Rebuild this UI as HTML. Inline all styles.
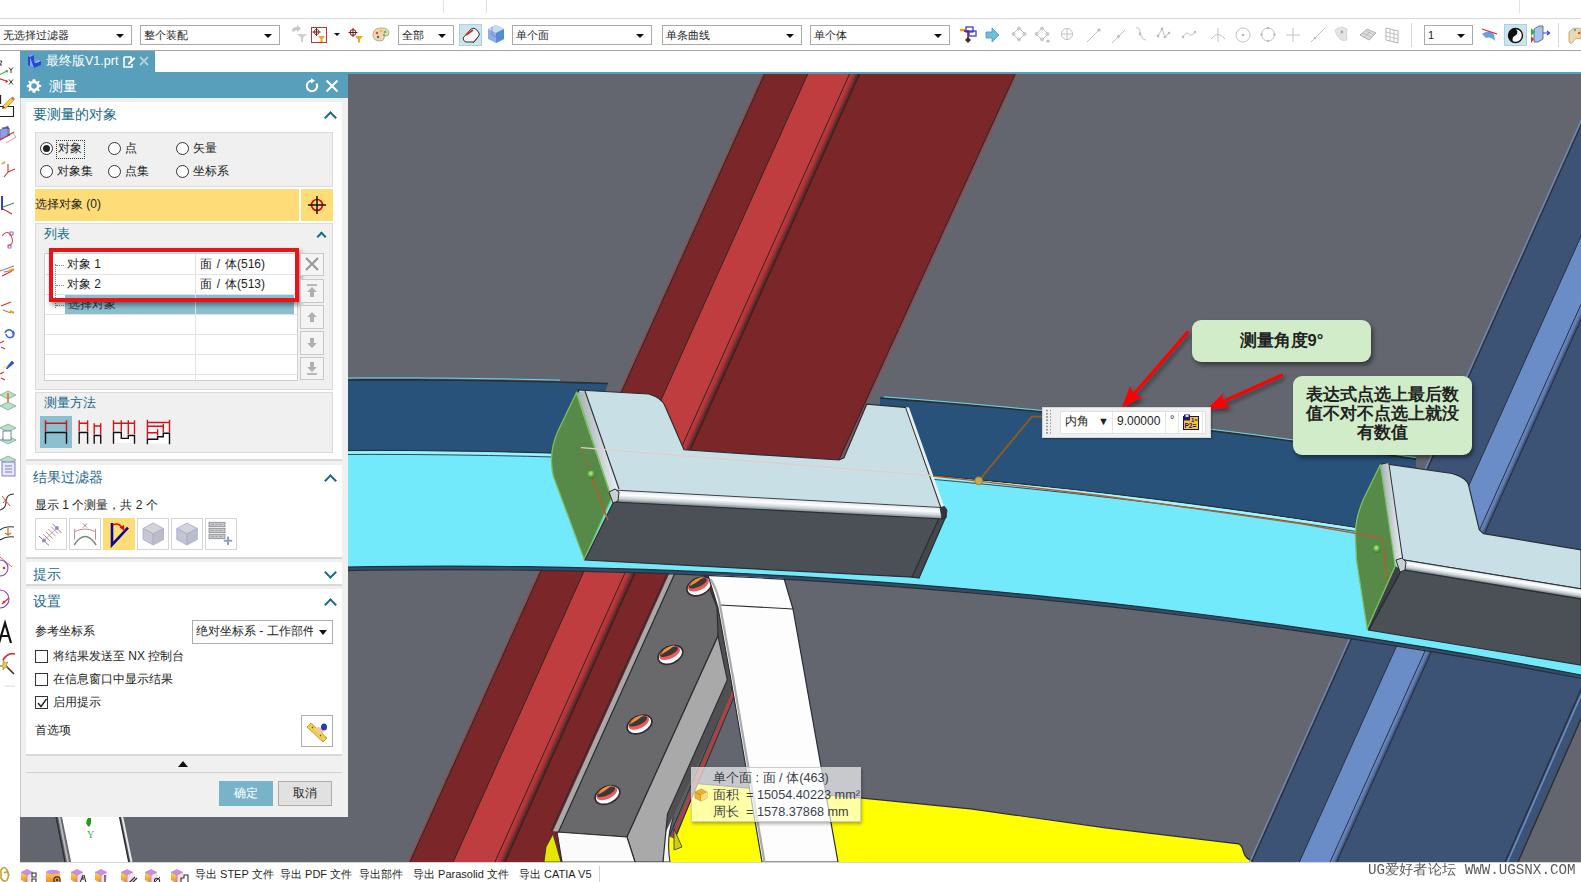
<!DOCTYPE html>
<html><head><meta charset="utf-8">
<style>
*{box-sizing:border-box;margin:0;padding:0}
html,body{width:1581px;height:882px;overflow:hidden;background:#fff}
body{position:relative;font-family:"Liberation Sans",sans-serif;font-size:12px;color:#1e1e1e}
.a{position:absolute}
.combo{position:absolute;height:20px;top:25px;border:1px solid #a9a9a9;background:#fff;font-size:11px;line-height:18px;padding-left:3px;white-space:nowrap;overflow:hidden}
.combo .dd{position:absolute;right:7px;top:8px;width:0;height:0;border-left:4px solid transparent;border-right:4px solid transparent;border-top:4px solid #111}
.sec{position:absolute;left:26px;width:316px;background:#fff}
.sh{position:absolute;left:7px;font-size:13.5px;color:#19698a}
.chev{position:absolute;width:9px;height:9px;border-left:2px solid #19698a;border-top:2px solid #19698a;transform:rotate(45deg)}
.chevd{position:absolute;width:9px;height:9px;border-right:2px solid #19698a;border-bottom:2px solid #19698a;transform:rotate(45deg)}
.grp{position:absolute;background:#f0f0f0;border:1px solid #dadada}
.radio{position:absolute;width:13px;height:13px;border:1px solid #333;border-radius:50%;background:#fff}
.cb{position:absolute;width:13px;height:13px;border:1px solid #333;background:#fff}
.btn{position:absolute;border:1px solid #c8c8c8;background:#f4f4f4}
.lrow{position:absolute;left:0;width:252px;height:20px;border-bottom:1px solid #e6e6e6}
</style></head><body>

<!-- top white bar -->
<div class="a" style="left:0;top:18px;width:1581px;height:1px;background:#d7d7d7"></div>
<div class="a" style="left:443px;top:0;width:1px;height:13px;background:#e2e2e2"></div>
<div class="a" style="left:486px;top:0;width:1px;height:13px;background:#e2e2e2"></div>
<div class="a" style="left:1519px;top:0;width:1px;height:13px;background:#e2e2e2"></div>
<!-- toolbar bottom line -->
<div class="a" style="left:0;top:50px;width:1581px;height:1px;background:#a0a6ab"></div>

<div class="combo" style="left:0;width:132px;border-left:none">无选择过滤器<i class="dd"></i></div>
<div class="combo" style="left:140px;width:140px">整个装配<i class="dd"></i></div>
<div class="combo" style="left:398px;width:56px">全部<i class="dd"></i></div>
<div class="combo" style="left:512px;width:140px">单个面<i class="dd"></i></div>
<div class="combo" style="left:662px;width:140px">单条曲线<i class="dd"></i></div>
<div class="combo" style="left:810px;width:140px">单个体<i class="dd"></i></div>
<div class="combo" style="left:1424px;width:49px">1<i class="dd"></i></div>

<!-- TOOLBAR_ICONS -->
<div class="a" style="left:459px;top:24px;width:23px;height:22px;background:#cde4ec;border:1px solid #a9d1de"></div>
<div class="a" style="left:1504px;top:24px;width:23px;height:22px;background:#cde4ec;border:1px solid #a9d1de"></div>
<div class="a" style="left:1411px;top:23px;width:1px;height:24px;background:#d8d8d8"></div>
<div class="a" style="left:1558px;top:23px;width:1px;height:24px;background:#d8d8d8"></div>
<svg class="a" style="left:0;top:18px" width="1581" height="32" viewBox="0 18 1581 32">
<!-- undo filter -->
<path d="M292,31 q0,-4 5,-4 v-2 l4,3.5 l-4,3.5 v-2 q-3,0 -3,2 z" fill="#c8c8c8"/><path d="M297,34 h10 l-4,4 v4 h-2 v-4 z" fill="#d0d0d0"/>
<!-- red box -->
<rect x="311.5" y="27.5" width="15" height="15" fill="none" stroke="#d03030" stroke-width="1"/>
<circle cx="316.5" cy="32" r="2.6" fill="none" stroke="#d02020" stroke-width="1"/><path d="M316.5,28 v8 M312.5,32 h8" stroke="#222" stroke-width="0.9"/>
<path d="M318,36 h7 l-2.5,3 v3 h-2 v-3 z" fill="#e8a820"/>
<path d="M334,33 h6 l-3,3 z" fill="#111"/>
<circle cx="353" cy="32.5" r="2.8" fill="none" stroke="#d02020" stroke-width="1.1"/><path d="M353,28 v9 M348.5,32.5 h9" stroke="#222" stroke-width="0.9"/>
<path d="M355,36 h8 l-3,3.5 v3 h-2 v-3 z" fill="#e8a820"/>
<!-- palette -->
<path d="M373,35 q0,-7 8,-7 q8,0 8,5 q0,3 -3,3 q-2,0 -2,2 q0,3 -4,3 q-7,0 -7,-6 z" fill="#ecd9b0" stroke="#b89a68" stroke-width="0.8"/>
<circle cx="377" cy="33" r="1.3" fill="#e44"/><circle cx="381" cy="31" r="1.3" fill="#fb0"/><circle cx="385" cy="32" r="1.3" fill="#4c4"/><circle cx="384" cy="35" r="1.1" fill="#48f"/><circle cx="378" cy="37" r="1.2" fill="#36c"/>
<!-- eraser in highlighted btn -->
<path d="M463,38 l8,-9 q3,-2 6,1 l2,3 q1,2 -1,4 l-4,5 h-8 q-3,-1 -3,-4 z" fill="#f8f8f8" stroke="#333" stroke-width="1"/><path d="M466,35 l7,-5" stroke="#e02020" stroke-width="1.6"/><path d="M473,43 l5,-6" stroke="#333" stroke-width="0.8"/>
<!-- cube -->
<path d="M488,29 l8,-4 l8,4 v10 l-8,4 l-8,-4 z" fill="#7fb3ea"/><path d="M488,29 l8,4 l8,-4 l-8,-4 z" fill="#c6dcf4"/><path d="M496,33 l8,-4 v10 l-8,4 z" fill="#4f8fd8"/><path d="M492,27 v8 l6,3" stroke="#e05080" stroke-width="0.7" fill="none"/>
<!-- tree icon -->
<path d="M960,30 h5" stroke="#f0a020" stroke-width="2.5"/><path d="M964,31 h4 v8" stroke="#e02020" stroke-width="1.8" fill="none"/><rect x="966" y="27" width="7" height="5" fill="none" stroke="#2030e0" stroke-width="1.2"/><rect x="969" y="31" width="7" height="5" fill="none" stroke="#2030e0" stroke-width="1.2"/><path d="M968,37 l3,3 l-3,3 l-3,-3 z" fill="#333"/>
<!-- arrow -->
<path d="M986,32 h6 v-4 l7,7 l-7,7 v-4 h-6 z" fill="#6ec0d8" stroke="#5090b0" stroke-width="0.8"/>
<!-- dotted shapes -->
<g stroke="#bbb" stroke-width="0.9" fill="none">
<path d="M1019,28 l6,6 l-6,6 l-6,-6 z"/><circle cx="1019" cy="28.5" r="1.5"/><circle cx="1019" cy="39.5" r="1.5"/><circle cx="1013.5" cy="34" r="1.5"/><circle cx="1024.5" cy="34" r="1.5"/>
<path d="M1042,28 l6,6 l-6,6 l-6,-6 z"/><circle cx="1042" cy="28.5" r="1.5"/><circle cx="1042" cy="39.5" r="1.5"/><circle cx="1036.5" cy="34" r="1.5"/><circle cx="1047.5" cy="34" r="1.5"/>
<circle cx="1067" cy="34" r="5.5"/><path d="M1067,28 v12 M1061,34 h12"/>
<path d="M1087,42 l12,-12"/><path d="M1112,43 l13,-13"/><path d="M1136,28 q4,-1 4,4 q0,3 2,5 q1,3 4,3"/>
<path d="M1158,36 l4,-7 l3,8 l4,-4"/><path d="M1183,37 q3,-6 6,-3 q3,3 6,-2"/>
<path d="M1218,28 v14 M1211,39 q7,-9 14,0"/>
<circle cx="1243" cy="35" r="7"/><circle cx="1268" cy="34.5" r="6.5"/>
<path d="M1293,28 v14 M1286,35 h14"/><path d="M1311,42 l14,-14"/>
</g>
<g fill="#bbb"><circle cx="1099" cy="30" r="1.6"/><circle cx="1118.5" cy="36.5" r="1.4"/><circle cx="1140" cy="34" r="1.4"/><circle cx="1162" cy="29" r="1.4"/><circle cx="1165" cy="37" r="1.4"/><circle cx="1158" cy="36" r="1.4"/><circle cx="1169" cy="33" r="1.3"/><circle cx="1183" cy="37" r="1.2"/><circle cx="1195" cy="32" r="1.2"/><circle cx="1243" cy="35" r="1.3"/><circle cx="1268" cy="28" r="1.2"/><circle cx="1268" cy="41" r="1.2"/><circle cx="1261.5" cy="34.5" r="1.2"/><circle cx="1274.5" cy="34.5" r="1.2"/><circle cx="1315" cy="38" r="1.3"/><circle cx="1048" cy="41" r="1.6"/></g>
<path d="M1335,30 q5,-5 12,-1 q-1,6 0,11 q-5,2 -9,-3 q-2,-3 -3,-7 z" fill="#e4e4e4" stroke="#cfcfcf" stroke-width="0.8"/><circle cx="1342" cy="32" r="1.4" fill="#aaa"/>
<path d="M1360,35 l7,-6 l9,4 l-7,7 z" fill="#ddd" stroke="#aaa" stroke-width="0.9"/><path d="M1363,33 l8,4 M1366,31 l8,4 M1364,37 l6,-5" stroke="#aaa" stroke-width="0.6"/>
<path d="M1386,28 l12,3 v12 l-12,-3 z" fill="none" stroke="#aaa" stroke-width="0.9"/><path d="M1390,29 v12 M1394,30 v12 M1386,32 l12,3 M1386,36 l12,3" stroke="#aaa" stroke-width="0.7"/>
<!-- right icons -->
<path d="M1482,34 q6,-5 12,0 l1,7 q-4,-5 -9,-3 z" fill="#6aa0e0"/><path d="M1482,29 l15,5" stroke="#e02020" stroke-width="1.2"/>
<circle cx="1515.5" cy="35.5" r="7" fill="#111"/><path d="M1515.5,28.5 a7,7 0 0 1 0,14 q-3,0 -3,-3 q0,-3 3,-4 q2,-1 2,-4 z" fill="#fff"/><circle cx="1515.5" cy="35.5" r="7" fill="none" stroke="#111" stroke-width="1.4"/>
<path d="M1534,29 l5,-3 h4 v13 l-5,3 h-4 z" fill="#a8c4f0" stroke="#555" stroke-width="0.8"/><path d="M1531,28 l4,4 l-4,4 z" fill="#30b040"/><path d="M1531,36 l3,3 l-3,4 z" fill="#e03030"/><path d="M1543,33 h6 M1547,31 l2.5,2 l-2.5,2" stroke="#3040e0" stroke-width="1.2" fill="none"/>
<path d="M1569,32 q5,-6 12,-3 v9 q-3,2 -5,0 l-4,5 q-2,1 -3,-1 z" fill="#ecd9b0" stroke="#b89a68" stroke-width="0.8"/><circle cx="1575" cy="30" r="1.2" fill="#4ad"/><circle cx="1579" cy="33" r="1.2" fill="#e44"/>
</svg>


<!-- tab strip -->
<div class="a" style="left:0;top:51px;width:20px;height:811px;background:#fff"></div>
<div class="a" style="left:20px;top:51px;width:135px;height:22px;background:#579fbb"></div>
<div class="a" style="left:20px;top:72px;width:1561px;height:2px;background:#579fbb"></div>
<div class="a" style="left:46px;top:53px;font-size:12.5px;color:#fff">最终版V1.prt</div>
<svg class="a" style="left:26px;top:53px" width="16" height="16" viewBox="0 0 16 16"><path d="M2,3 l4,-2 l2,1 v7 l5,-2 l2,1 v4 l-7,3 l-6,-3 z" fill="#2848d0"/><path d="M2,3 l4,-2 l2,1 l-4,2 z M4,4 v9 l4,2" fill="#7fa8ff"/><path d="M8,9 l5,-2 l2,1 l-5,2 z" fill="#a0c0ff"/></svg>
<svg class="a" style="left:122px;top:55px" width="14" height="14" viewBox="0 0 14 14"><path d="M2,2 h7 v3 M2,2 v10 h8 v-3" fill="none" stroke="#fff" stroke-width="1.6"/><path d="M6,8 l6,-6 l1.5,1.5 l-6,6 h-1.5 z" fill="#fff"/></svg>
<svg class="a" style="left:138px;top:55px" width="12" height="12" viewBox="0 0 12 12"><path d="M2,2 L10,10 M10,2 L2,10" stroke="#b8d0da" stroke-width="1.8"/></svg>

<!-- LEFT_ICONS -->
<svg class="a" style="left:0;top:51px" width="20" height="811" viewBox="0 51 20 811">
<g fill="none" stroke-width="1.1">
<path d="M0,61 h2 l-2,4 h2" stroke="#333" stroke-width="0.9"/><path d="M0,74.5 L7,71" stroke="#30b040"/><path d="M5.5,70 L8.5,70.5 L7,73 Z" fill="#30b040" stroke="none"/><path d="M0,78.8 L7,81.3" stroke="#d03030"/><path d="M6,79.5 L8.5,81.8 L5.5,83 Z" fill="#d03030" stroke="none"/><path d="M9,67.5 l2,2.5 l2,-2.5 M11,70 v3" stroke="#222" stroke-width="0.9"/><path d="M9,79.5 l4,5 M13,79.5 l-4,5" stroke="#222" stroke-width="0.9"/>
<path d="M0.5,95 v9" stroke="#222" stroke-width="1.3"/><path d="M0,106.5 h13.5 v10 h-13.5" stroke="#222" stroke-width="1.1"/><path d="M3,106 l8,-8 l2.5,2.5 l-8,8 z" fill="#f4d040" stroke="#a08020" stroke-width="0.6"/><path d="M11,98 l1.5,-1.5 l2.5,2.5 l-1.5,1.5 z" fill="#e06060" stroke="none"/><path d="M3,106 l-1,3 l3,-1 z" fill="#333" stroke="none"/>
<path d="M0,130 l8,-4 v10 l-8,4 z" fill="#8aa0e8" stroke="#5060b0" stroke-width="0.7"/><path d="M0,140 l14,-8" stroke="#e03030"/><path d="M2,128 h7 v8" stroke="#222" stroke-width="0.8"/><path d="M6,143 l10,-6 l-4,-5" stroke="#e08080" stroke-width="0.8"/>
<path d="M8,172 v-8 M8,172 l7,-3 M8,172 l-4,5" stroke="#d03030"/><path d="M2,164 l3,-2" stroke="#f0a020" stroke-width="2"/>
<path d="M2,210 v-14" stroke="#3040d0" stroke-width="2"/><path d="M3,207 l11,-4" stroke="#2aa02a"/><path d="M3,209 l9,5" stroke="#d02a2a"/>
<path d="M2,236 q6,-8 10,2 q2,6 -4,8" stroke="#d05050"/><rect x="10" y="232" width="3" height="3" stroke="#a040a0" stroke-width="0.8"/><rect x="8" y="245" width="3" height="3" stroke="#a040a0" stroke-width="0.8"/>
<path d="M0,271 l14,-5 M4,272 l10,-2" stroke="#888"/><path d="M2,276 l10,-5" stroke="#d03030"/><path d="M9,271 l5,-2" stroke="#f0a020" stroke-width="2"/>
<path d="M1,306 l10,-4" stroke="#d03030"/><path d="M3,310 l8,3" stroke="#888"/><path d="M10,311 l4,2" stroke="#f0a020" stroke-width="2"/>
<path d="M5,333 a4,4 0 1 1 8,2 M13,331 a4,4 0 1 1 -7,3" stroke="#3a6ad8" stroke-width="1.6"/><path d="M0,343 l4,-2 M1,347 l4,2" stroke="#d03030"/>
<path d="M6,368 l6,-7 l2,2 l-7,6 z" fill="#3050d0" stroke="#2040a0" stroke-width="0.6"/><path d="M3,368 l4,-2" stroke="#f8f0a0" stroke-width="2.5"/><path d="M0,374 l4,-2 M1,378 l4,2" stroke="#d03030"/>
<path d="M0,395 l8,-4 l8,4 l-8,4 z M0,406 l8,-4 l8,4 l-8,4 z" fill="#b8e0c8" stroke="#70a080" stroke-width="0.7"/><path d="M8,393 v9" stroke="#e07020" stroke-width="1.6"/>
<path d="M0,428 l8,-4 l8,4 l-8,4 z M0,440 l8,-4 l8,4 l-8,4 z" fill="#b8e0c8" stroke="#70a080" stroke-width="0.7"/><rect x="3" y="431" width="8" height="9" fill="#fff" stroke="#4050a0" stroke-width="0.7"/>
<path d="M0,460 l8,-4 l8,4 l-8,4 z" fill="#b8e0c8" stroke="#70a080" stroke-width="0.7"/><rect x="2" y="462" width="13" height="14" fill="#e8e8ff" stroke="#6060c0" stroke-width="0.8"/><path d="M5,466 h7 M5,469 h7 M5,472 h7" stroke="#6060c0" stroke-width="0.8"/>
<path d="M0,510 q6,-2 6,-8 q0,-8 8,-8" stroke="#333"/><path d="M2,496 l8,10 M8,497 l-5,6" stroke="#e03030" stroke-width="0.9"/>
<path d="M0,530 q5,-4 14,-3 M0,540 q6,-4 14,-3" stroke="#333"/><path d="M8,528 v7 l-3,-2 M8,535 l3,-2" stroke="#e07020" stroke-width="1.3"/>
<path d="M0,560 a8,8 0 0 1 0,16" stroke="#9040b0"/><path d="M0,557 l12,10" stroke="#e03030" stroke-width="0.8"/><circle cx="4" cy="568" r="1.3" fill="#e03030" stroke="none"/>
<path d="M0,590 a9,9 0 1 1 0,18" stroke="#9040b0"/><path d="M2,604 l7,-6" stroke="#e03030" stroke-width="1.3"/><circle cx="4" cy="602" r="1.3" fill="#e03030" stroke="none"/>
<path d="M-1,643 l6,-20 l6,20 M2,636 h7" stroke="#111" stroke-width="2.2"/>
<path d="M3,660 q5,-8 12,-6" stroke="#d03030" stroke-width="1.8"/><path d="M4,664 l10,10" stroke="#333" stroke-width="1.6"/><path d="M3,660 l2,3 l3,-1 l-2,3 l2,3 l-3,-1 l-2,3 l0,-3 l-3,-1 l3,-1 z" fill="#f0d040" stroke="#806020" stroke-width="0.5"/>
<path d="M5,686 h10" stroke="#ddd"/>
</g></svg>

<!-- VIEWPORT -->
<svg class="a" style="left:20px;top:74px" width="1561" height="788" viewBox="20 74 1561 788">
<rect x="20" y="74" width="1561" height="788" fill="#63666f"/>
<polygon points="61.8,816.0 119.2,816.0 128.6,862.0 71.1,862.0" fill="#ffffff" />
<line x1="56" y1="816" x2="65" y2="862" stroke="#2b2e33" stroke-width="1.4"/>
<line x1="59" y1="816" x2="68" y2="862" stroke="#b9b9b9" stroke-width="2"/>
<line x1="119.5" y1="816" x2="128.8" y2="862" stroke="#2b2e33" stroke-width="1.4"/>
<line x1="122" y1="816" x2="131.5" y2="862" stroke="#e8e8e8" stroke-width="2"/>
<path d="M88,818 q-4,5 1,9 q3,-4 2,-9 z" fill="#1f9a1f"/><text x="87" y="838" font-size="10" fill="#3cae3c" font-family="Liberation Serif">Y</text>
<polygon points="20.0,390.0 34.7,389.2 49.4,388.5 64.1,387.7 78.8,387.1 93.5,386.4 108.2,385.8 122.9,385.2 137.6,384.6 152.3,384.0 167.0,383.5 181.7,383.1 196.4,382.6 211.1,382.2 225.8,381.9 240.5,381.5 255.2,381.2 269.9,380.9 284.6,380.7 299.3,380.5 314.0,380.3 328.7,380.1 343.4,380.0 358.1,379.9 372.8,379.9 387.5,379.9 402.2,379.9 416.9,379.9 431.6,380.0 446.3,380.1 461.0,380.3 475.7,380.5 490.4,380.7 505.1,380.9 519.8,381.2 534.5,381.5 549.2,381.8 563.9,382.2 578.6,382.6 593.3,383.0 608.0,383.5 585.0,450.0 585.0,454.0 570.9,453.5 556.8,453.1 542.6,452.7 528.5,452.3 514.4,452.0 500.2,451.7 486.1,451.4 472.0,451.2 457.9,451.0 443.8,450.8 429.6,450.7 415.5,450.6 401.4,450.5 387.2,450.5 373.1,450.4 359.0,450.5 344.9,450.5 330.8,450.6 316.6,450.7 302.5,450.9 288.4,451.0 274.2,451.3 260.1,451.5 246.0,451.8 231.9,452.1 217.8,452.4 203.6,452.8 189.5,453.2 175.4,453.6 161.2,454.1 147.1,454.6 133.0,455.1 118.9,455.7 104.8,456.3 90.6,456.9 76.5,457.6 62.4,458.3 48.2,459.0 34.1,459.7 20.0,460.5" fill="#285279" />
<polyline points="20.0,390.0 34.7,389.2 49.4,388.5 64.1,387.7 78.8,387.1 93.5,386.4 108.2,385.8 122.9,385.2 137.6,384.6 152.3,384.0 167.0,383.5 181.7,383.1 196.4,382.6 211.1,382.2 225.8,381.9 240.5,381.5 255.2,381.2 269.9,380.9 284.6,380.7 299.3,380.5 314.0,380.3 328.7,380.1 343.4,380.0 358.1,379.9 372.8,379.9 387.5,379.9 402.2,379.9 416.9,379.9 431.6,380.0 446.3,380.1 461.0,380.3 475.7,380.5 490.4,380.7 505.1,380.9 519.8,381.2 534.5,381.5 549.2,381.8 563.9,382.2 578.6,382.6 593.3,383.0 608.0,383.5" fill="none" stroke="#2b2e33" stroke-width="1.6"/>
<polyline points="200.0,380.5 209.0,380.3 218.0,380.0 227.0,379.8 236.0,379.6 245.0,379.4 254.0,379.2 263.0,379.1 272.0,378.9 281.0,378.7 290.0,378.6 299.0,378.5 308.0,378.4 317.0,378.3 326.0,378.2 335.0,378.1 344.0,378.0 353.0,378.0 362.0,377.9 371.0,377.9 380.0,377.9 389.0,377.9 398.0,377.9 407.0,377.9 416.0,377.9 425.0,378.0 434.0,378.0 443.0,378.1 452.0,378.2 461.0,378.3 470.0,378.4 479.0,378.5 488.0,378.6 497.0,378.8 506.0,378.9 515.0,379.1 524.0,379.3 533.0,379.5 542.0,379.7 551.0,379.9 560.0,380.1" fill="none" stroke="#5fd8ee" stroke-width="1"/>
<polygon points="880.0,398.0 893.4,399.0 906.8,400.1 920.2,401.1 933.6,402.2 947.0,403.3 960.4,404.5 973.8,405.6 987.2,406.8 1000.6,408.0 1014.0,409.3 1027.4,410.5 1040.8,411.8 1054.2,413.2 1067.6,414.5 1081.0,415.9 1094.4,417.3 1107.8,418.7 1121.2,420.2 1134.6,421.7 1148.0,423.2 1161.4,424.7 1174.8,426.3 1188.2,427.9 1201.6,429.5 1215.0,431.2 1228.4,432.9 1241.8,434.6 1255.2,436.3 1268.6,438.0 1282.0,439.8 1295.4,441.6 1308.8,443.5 1322.2,445.3 1335.6,447.2 1349.0,449.1 1362.4,451.1 1375.8,453.1 1389.2,455.1 1402.6,457.1 1416.0,459.1 1416.0,528.0 1416.0,537.2 1402.6,534.9 1389.2,532.8 1375.8,530.6 1362.4,528.5 1349.0,526.4 1335.6,524.3 1322.2,522.2 1308.8,520.2 1295.4,518.2 1282.0,516.3 1268.6,514.3 1255.2,512.4 1241.8,510.6 1228.4,508.7 1215.0,506.9 1201.6,505.1 1188.2,503.4 1174.8,501.6 1161.4,499.9 1148.0,498.3 1134.6,496.6 1121.2,495.0 1107.8,493.4 1094.4,491.9 1081.0,490.3 1067.6,488.8 1054.2,487.4 1040.8,485.9 1027.4,484.5 1014.0,483.1 1000.6,481.8 987.2,480.4 973.8,479.1 960.4,477.9 947.0,476.6 933.6,475.4 920.2,474.2 906.8,473.1 893.4,472.0 880.0,470.9" fill="#285279" />
<polyline points="880.0,398.0 893.4,399.0 906.8,400.1 920.2,401.1 933.6,402.2 947.0,403.3 960.4,404.5 973.8,405.6 987.2,406.8 1000.6,408.0 1014.0,409.3 1027.4,410.5 1040.8,411.8 1054.2,413.2 1067.6,414.5 1081.0,415.9 1094.4,417.3 1107.8,418.7 1121.2,420.2 1134.6,421.7 1148.0,423.2 1161.4,424.7 1174.8,426.3 1188.2,427.9 1201.6,429.5 1215.0,431.2 1228.4,432.9 1241.8,434.6 1255.2,436.3 1268.6,438.0 1282.0,439.8 1295.4,441.6 1308.8,443.5 1322.2,445.3 1335.6,447.2 1349.0,449.1 1362.4,451.1 1375.8,453.1 1389.2,455.1 1402.6,457.1 1416.0,459.1" fill="none" stroke="#2b2e33" stroke-width="1.6"/>
<polyline points="884.0,396.8 897.3,397.8 910.6,398.9 923.9,399.9 937.2,401.0 950.5,402.1 963.8,403.2 977.1,404.4 990.4,405.6 1003.7,406.8 1017.0,408.1 1030.3,409.3 1043.6,410.6 1056.9,411.9 1070.2,413.3 1083.5,414.7 1096.8,416.1 1110.1,417.5 1123.4,418.9 1136.7,420.4 1150.0,421.9 1163.3,423.5 1176.6,425.0 1189.9,426.6 1203.2,428.2 1216.5,429.9 1229.8,431.5 1243.1,433.2 1256.4,434.9 1269.7,436.7 1283.0,438.5 1296.3,440.3 1309.6,442.1 1322.9,443.9 1336.2,445.8 1349.5,447.7 1362.8,449.6 1376.1,451.6 1389.4,453.6 1402.7,455.6 1416.0,457.6" fill="none" stroke="#5fd8ee" stroke-width="1"/>
<path d="M664,781 L690,783 L862.6,798.1 L972.8,809.2 L1105.7,827.8 L1238.5,843.8 Q1242.5,846 1243.5,852 Q1246,861 1258,862 L664,862 Z" fill="#ffff00" />
<path d="M690,783 L862.6,798.1 L972.8,809.2 L1105.7,827.8 L1238.5,843.8 Q1242.5,846 1243.5,852 Q1246,861 1258,862" fill="none" stroke="#2b2e33" stroke-width="1.2"/>
<polygon points="764.5,74.0 1015.2,74.0 655.1,862.0 409.9,862.0" fill="#7b2629" />
<polygon points="807.7,74.0 849.5,74.0 494.9,862.0 453.1,862.0" fill="#c03d3f" />
<defs><linearGradient id="fold" gradientUnits="userSpaceOnUse" x1="882.8" y1="0" x2="893" y2="0" gradientTransform="skewX(-24.23)"><stop offset="0" stop-color="#c23e40"/><stop offset="0.45" stop-color="#a83436"/><stop offset="1" stop-color="#3c2426"/></linearGradient><linearGradient id="bfold" gradientUnits="userSpaceOnUse" x1="1718" y1="0" x2="1725" y2="0" gradientTransform="skewX(-24.23)"><stop offset="0" stop-color="#6d90c8"/><stop offset="0.5" stop-color="#5a78ad"/><stop offset="1" stop-color="#2e3c58"/></linearGradient></defs>
<polygon points="849.5,74.0 859.7,74.0 505.1,862.0 494.9,862.0" fill="url(#fold)" />
<line x1="764.5" y1="74" x2="409.9" y2="862" stroke="#2e2e30" stroke-width="1.3"/>
<line x1="807.7" y1="74" x2="453.1" y2="862" stroke="#3a2020" stroke-width="1"/>
<line x1="849.5" y1="74" x2="494.9" y2="862" stroke="#3a2020" stroke-width="1"/>
<line x1="859.7" y1="74" x2="505.1" y2="862" stroke="#3a2020" stroke-width="1"/>
<line x1="1015.2" y1="74" x2="655.1" y2="862" stroke="#2e2e30" stroke-width="1.3"/>
<line x1="763.0" y1="74" x2="408.4" y2="862" stroke="#b33a3a" stroke-width="1"/>
<line x1="1016.7" y1="74" x2="656.6" y2="862" stroke="#b33a3a" stroke-width="1"/>
<polygon points="1603.9,74.0 1700.0,74.0 1864.7,74.0 1518.0,862.0 1251.7,862.0" fill="#3d5376" />
<polygon points="1654.0,74.0 1684.7,74.0 1330.1,862.0 1299.4,862.0" fill="#6b8dc7" />
<polygon points="1684.7,74.0 1691.5,74.0 1336.9,862.0 1330.1,862.0" fill="url(#bfold)" />
<line x1="1603.9" y1="74" x2="1251.7" y2="862" stroke="#2b2e33" stroke-width="1.3"/>
<line x1="1654.0" y1="74" x2="1299.4" y2="862" stroke="#2b3040" stroke-width="1"/>
<line x1="1684.7" y1="74" x2="1330.1" y2="862" stroke="#2b3040" stroke-width="1"/>
<line x1="1691.5" y1="74" x2="1336.9" y2="862" stroke="#2b3040" stroke-width="1"/>
<line x1="1851.7" y1="74" x2="1505.0" y2="862" stroke="#2b2e33" stroke-width="1.3"/>
<line x1="1601.9" y1="74" x2="1249.7" y2="862" stroke="#6b8dc7" stroke-width="1.2"/>
<line x1="1854.2" y1="74" x2="1507.5" y2="862" stroke="#6b8dc7" stroke-width="1.6"/>
<line x1="1864.7" y1="74" x2="1518.0" y2="862" stroke="#2b2e33" stroke-width="1.4"/>
<polygon points="722.0,690.0 736.0,690.0 676.0,838.0 664.0,836.0" fill="#5e5e60" />
<line x1="734.5" y1="690" x2="672.5" y2="838" stroke="#c03a3c" stroke-width="2.4"/>
<line x1="731.5" y1="690" x2="669.5" y2="836" stroke="#2b2e33" stroke-width="1"/>
<line x1="737" y1="690" x2="675" y2="838" stroke="#2b2e33" stroke-width="1"/>
<path d="M669,815.4 Q660,836 663,862 L670,862 Q666,838 673.3,817.5 Z" fill="#f6f6f6" stroke="#2b2e33" stroke-width="1.1"/>
<polygon points="674.0,829.0 682.0,847.0 674.0,850.0" fill="#cfcf10" stroke="#2b2e33" stroke-width="0.8"/>
<polygon points="670.0,600.0 731.0,604.0 731.0,694.0 664.0,836.0" fill="#505052" />
<polygon points="674.0,572.0 703.0,572.0 717.0,607.0 718.0,636.0 627.0,837.0 557.0,832.0" fill="#69696b" stroke="#2b2e33" stroke-width="1.2"/>
<polygon points="670.0,572.0 675.0,572.0 558.0,832.0 553.0,831.0" fill="#a9a9a9" />
<line x1="668" y1="572" x2="551" y2="831" stroke="#2b2e33" stroke-width="1.3"/>
<line x1="675.5" y1="572" x2="558.5" y2="832" stroke="#2b2e33" stroke-width="1.2"/>
<polygon points="718.0,636.0 727.3,680.0 667.5,814.0 663.0,862.0 635.0,862.0 627.0,837.0" fill="#a9a9aa" stroke="#2b2e33" stroke-width="1.2"/>
<polygon points="557.0,832.0 627.0,837.0 635.0,862.0 562.0,862.0" fill="#fbfbfb" stroke="#2b2e33" stroke-width="1.2"/>
<polygon points="546.0,847.0 553.0,834.0 561.0,862.0 544.0,862.0" fill="#e6e600" stroke="#2b2e33" stroke-width="0.8"/>
<ellipse cx="699.3" cy="586.4" rx="13" ry="8.5" fill="#fff" stroke="#2b2e33" stroke-width="1.7" transform="rotate(-24 699.3 586.4)"/>
<ellipse cx="699.3" cy="584.4" rx="11.2" ry="5.8" fill="#f05a5a" transform="rotate(-24 699.3 586.4)"/>
<ellipse cx="699.3" cy="583.0" rx="9.8" ry="3.6" fill="#3a3a3a" transform="rotate(-24 699.3 586.4)"/>
<path d="M690.3,582.4 Q697.3,576.4 707.3,579.4 Q699.3,581.9 690.3,582.4 z" fill="#f59030" transform="rotate(-24 699.3 586.4)"/>
<ellipse cx="670.4" cy="654.9" rx="13" ry="8.5" fill="#fff" stroke="#2b2e33" stroke-width="1.7" transform="rotate(-24 670.4 654.9)"/>
<ellipse cx="670.4" cy="652.9" rx="11.2" ry="5.8" fill="#f05a5a" transform="rotate(-24 670.4 654.9)"/>
<ellipse cx="670.4" cy="651.5" rx="9.8" ry="3.6" fill="#3a3a3a" transform="rotate(-24 670.4 654.9)"/>
<path d="M661.4,650.9 Q668.4,644.9 678.4,647.9 Q670.4,650.4 661.4,650.9 z" fill="#f59030" transform="rotate(-24 670.4 654.9)"/>
<ellipse cx="639.5" cy="724.5" rx="13" ry="8.5" fill="#fff" stroke="#2b2e33" stroke-width="1.7" transform="rotate(-24 639.5 724.5)"/>
<ellipse cx="639.5" cy="722.5" rx="11.2" ry="5.8" fill="#f05a5a" transform="rotate(-24 639.5 724.5)"/>
<ellipse cx="639.5" cy="721.1" rx="9.8" ry="3.6" fill="#3a3a3a" transform="rotate(-24 639.5 724.5)"/>
<path d="M630.5,720.5 Q637.5,714.5 647.5,717.5 Q639.5,720.0 630.5,720.5 z" fill="#f59030" transform="rotate(-24 639.5 724.5)"/>
<ellipse cx="607.5" cy="795" rx="13" ry="8.5" fill="#fff" stroke="#2b2e33" stroke-width="1.7" transform="rotate(-24 607.5 795)"/>
<ellipse cx="607.5" cy="793" rx="11.2" ry="5.8" fill="#f05a5a" transform="rotate(-24 607.5 795)"/>
<ellipse cx="607.5" cy="791.6" rx="9.8" ry="3.6" fill="#3a3a3a" transform="rotate(-24 607.5 795)"/>
<path d="M598.5,791 Q605.5,785 615.5,788 Q607.5,790.5 598.5,791 z" fill="#f59030" transform="rotate(-24 607.5 795)"/>
<polygon points="707.0,572.0 783.0,575.0 793.0,609.0 838.0,862.0 762.0,862.0 731.0,680.0 718.0,608.0" fill="#fdfdfd" stroke="#2b2e33" stroke-width="1.2"/>
<line x1="720" y1="605" x2="793" y2="609" stroke="#2b2e33" stroke-width="1.1"/>
<path d="M708,579 Q716,592 718,608 L731,680 L762,862" fill="none" stroke="#a9a9aa" stroke-width="2.2" transform="translate(2.5,0)"/>
<polygon points="20.0,460.5 59.0,458.4 98.0,456.6 137.1,455.0 176.1,453.6 215.1,452.5 254.2,451.6 293.2,451.0 332.2,450.6 371.2,450.4 410.2,450.5 449.3,450.9 488.3,451.5 527.3,452.3 566.4,453.4 605.4,454.7 644.4,456.3 683.4,458.1 722.5,460.1 761.5,462.4 800.5,464.9 839.5,467.7 878.5,470.7 917.6,474.0 956.6,477.5 995.6,481.3 1034.7,485.3 1073.7,489.5 1112.7,494.0 1151.7,498.7 1190.8,503.7 1229.8,508.9 1268.8,514.4 1307.8,520.1 1346.8,526.0 1385.9,532.2 1424.9,538.6 1463.9,545.3 1503.0,552.2 1542.0,559.4 1581.0,566.8 1581.0,675.0 1542.0,667.6 1503.0,660.5 1463.9,653.7 1424.9,647.1 1385.9,640.8 1346.8,634.7 1307.8,628.9 1268.8,623.3 1229.8,618.0 1190.8,613.0 1151.7,608.2 1112.7,603.6 1073.7,599.4 1034.7,595.4 995.6,591.6 956.6,588.1 917.6,584.9 878.5,581.9 839.5,579.2 800.5,576.7 761.5,574.5 722.5,572.6 683.4,570.9 644.4,569.4 605.4,568.3 566.4,567.4 527.3,566.7 488.3,566.3 449.3,566.2 410.2,566.3 371.2,566.7 332.2,567.3 293.2,568.2 254.2,569.3 215.1,570.7 176.1,572.4 137.1,574.3 98.0,576.5 59.0,579.0 20.0,581.7" fill="#72eafb" />
<polyline points="20.0,583.2 59.0,580.5 98.0,578.0 137.1,575.8 176.1,573.9 215.1,572.2 254.2,570.8 293.2,569.7 332.2,568.8 371.2,568.2 410.2,567.8 449.3,567.7 488.3,567.8 527.3,568.2 566.4,568.9 605.4,569.8 644.4,570.9 683.4,572.4 722.5,574.1 761.5,576.0 800.5,578.2 839.5,580.7 878.5,583.4 917.6,586.4 956.6,589.6 995.6,593.1 1034.7,596.9 1073.7,600.9 1112.7,605.1 1151.7,609.7 1190.8,614.5 1229.8,619.5 1268.8,624.8 1307.8,630.4 1346.8,636.2 1385.9,642.3 1424.9,648.6 1463.9,655.2 1503.0,662.0 1542.0,669.1 1581.0,676.5" fill="none" stroke="#2b4f72" stroke-width="3"/>
<polyline points="20.0,585.2 59.0,582.5 98.0,580.0 137.1,577.8 176.1,575.9 215.1,574.2 254.2,572.8 293.2,571.7 332.2,570.8 371.2,570.2 410.2,569.8 449.3,569.7 488.3,569.8 527.3,570.2 566.4,570.9 605.4,571.8 644.4,572.9 683.4,574.4 722.5,576.1 761.5,578.0 800.5,580.2 839.5,582.7 878.5,585.4 917.6,588.4 956.6,591.6 995.6,595.1 1034.7,598.9 1073.7,602.9 1112.7,607.1 1151.7,611.7 1190.8,616.5 1229.8,621.5 1268.8,626.8 1307.8,632.4 1346.8,638.2 1385.9,644.3 1424.9,650.6 1463.9,657.2 1503.0,664.0 1542.0,671.1 1581.0,678.5" fill="none" stroke="#2b2e33" stroke-width="1.2"/>
<polyline points="20.0,581.7 59.0,579.0 98.0,576.5 137.1,574.3 176.1,572.4 215.1,570.7 254.2,569.3 293.2,568.2 332.2,567.3 371.2,566.7 410.2,566.3 449.3,566.2 488.3,566.3 527.3,566.7 566.4,567.4 605.4,568.3 644.4,569.4 683.4,570.9 722.5,572.6 761.5,574.5 800.5,576.7 839.5,579.2 878.5,581.9 917.6,584.9 956.6,588.1 995.6,591.6 1034.7,595.4 1073.7,599.4 1112.7,603.6 1151.7,608.2 1190.8,613.0 1229.8,618.0 1268.8,623.3 1307.8,628.9 1346.8,634.7 1385.9,640.8 1424.9,647.1 1463.9,653.7 1503.0,660.5 1542.0,667.6 1581.0,675.0" fill="none" stroke="#2b2e33" stroke-width="1.2"/>
<polyline points="20.0,460.5 59.0,458.4 98.0,456.6 137.1,455.0 176.1,453.6 215.1,452.5 254.2,451.6 293.2,451.0 332.2,450.6 371.2,450.4 410.2,450.5 449.3,450.9 488.3,451.5 527.3,452.3 566.4,453.4 605.4,454.7 644.4,456.3 683.4,458.1 722.5,460.1 761.5,462.4 800.5,464.9 839.5,467.7 878.5,470.7 917.6,474.0 956.6,477.5 995.6,481.3 1034.7,485.3 1073.7,489.5 1112.7,494.0 1151.7,498.7 1190.8,503.7 1229.8,508.9 1268.8,514.4 1307.8,520.1 1346.8,526.0 1385.9,532.2 1424.9,538.6 1463.9,545.3 1503.0,552.2 1542.0,559.4 1581.0,566.8" fill="none" stroke="#2b2e33" stroke-width="1.2"/>
<polyline points="20.0,462.5 59.0,460.4 98.0,458.6 137.1,457.0 176.1,455.6 215.1,454.5 254.2,453.6 293.2,453.0 332.2,452.6 371.2,452.4 410.2,452.5 449.3,452.9 488.3,453.5 527.3,454.3 566.4,455.4 605.4,456.7 644.4,458.3 683.4,460.1 722.5,462.1 761.5,464.4 800.5,466.9 839.5,469.7 878.5,472.7 917.6,476.0 956.6,479.5 995.6,483.3 1034.7,487.3 1073.7,491.5 1112.7,496.0 1151.7,500.7 1190.8,505.7 1229.8,510.9 1268.8,516.4 1307.8,522.1 1346.8,528.0 1385.9,534.2 1424.9,540.6 1463.9,547.3 1503.0,554.2 1542.0,561.4 1581.0,568.8" fill="none" stroke="#9ef2ff" stroke-width="2"/>
<polyline points="20.0,464.5 59.0,462.4 98.0,460.6 137.1,459.0 176.1,457.6 215.1,456.5 254.2,455.6 293.2,455.0 332.2,454.6 371.2,454.4 410.2,454.5 449.3,454.9 488.3,455.5 527.3,456.3 566.4,457.4 605.4,458.7 644.4,460.3 683.4,462.1 722.5,464.1 761.5,466.4 800.5,468.9 839.5,471.7 878.5,474.7 917.6,478.0 956.6,481.5 995.6,485.3 1034.7,489.3 1073.7,493.5 1112.7,498.0 1151.7,502.7 1190.8,507.7 1229.8,512.9 1268.8,518.4 1307.8,524.1 1346.8,530.0 1385.9,536.2 1424.9,542.6 1463.9,549.3 1503.0,556.2 1542.0,563.4 1581.0,570.8" fill="none" stroke="#3a4a55" stroke-width="1"/>
<polyline points="880.0,472.4 893.4,473.5 906.8,474.6 920.2,475.7 933.6,476.9 947.0,478.1 960.4,479.4 973.8,480.6 987.2,481.9 1000.6,483.3 1014.0,484.6 1027.4,486.0 1040.8,487.4 1054.2,488.9 1067.6,490.3 1081.0,491.8 1094.4,493.4 1107.8,494.9 1121.2,496.5 1134.6,498.1 1148.0,499.8 1161.4,501.4 1174.8,503.1 1188.2,504.9 1201.6,506.6 1215.0,508.4 1228.4,510.2 1241.8,512.1 1255.2,513.9 1268.6,515.8 1282.0,517.8 1295.4,519.7 1308.8,521.7 1322.2,523.7 1335.6,525.8 1349.0,527.9 1362.4,530.0 1375.8,532.1 1389.2,534.3 1402.6,536.4 1416.0,538.7" fill="none" stroke="#aef6ff" stroke-width="1"/>
<defs><linearGradient id="rg" x1="0" y1="0" x2="1" y2="-0.35"><stop offset="0" stop-color="#a3afb3"/><stop offset="0.55" stop-color="#e4ecee"/><stop offset="1" stop-color="#cfdde2"/></linearGradient><linearGradient id="tg" x1="0" y1="0" x2="0" y2="1"><stop offset="0" stop-color="#dfe7e9"/><stop offset="0.3" stop-color="#ffffff"/><stop offset="0.65" stop-color="#c4cdd0"/><stop offset="1" stop-color="#68727a"/></linearGradient><radialGradient id="ball" cx="0.4" cy="0.35" r="0.6"><stop offset="0" stop-color="#b8f0a0"/><stop offset="0.6" stop-color="#5cb040"/><stop offset="1" stop-color="#3a8028"/></radialGradient></defs>
<path d="M576.4,392.7 L558,431 Q551,447 551.5,462 Q552,472 554,478 L584.2,559.4 L611.6,498.2 L583.3,414 Z" fill="#578a48" stroke="#7cc064" stroke-width="1.3"/>
<path d="M578,390 L648.8,394 Q662,398 665,406 L684,449.8 L839,460 L843.9,457.7 L866.7,404.2 L907.7,407.6 L942,509 L613.5,492 Z" fill="#c9dfe6" stroke="#2b2e33" stroke-width="1.2"/>
<polygon points="576.4,392.7 585.0,391.0 619.0,489.0 613.0,494.0 611.6,498.2" fill="url(#rg)" />
<line x1="585" y1="391" x2="619" y2="489" stroke="#2b2e33" stroke-width="1.1"/>
<line x1="577" y1="393" x2="611.6" y2="498" stroke="#7cc064" stroke-width="1.2"/>
<polygon points="614.0,501.0 940.0,517.0 913.0,577.2 585.0,560.0" fill="#4a5055" stroke="#2b2e33" stroke-width="1.2"/>
<polygon points="940.0,516.0 946.0,516.0 919.0,578.0 912.0,577.0" fill="#42484b" stroke="#2b2e33" stroke-width="1.2"/>
<polygon points="613.0,489.5 942.0,507.0 943.0,519.0 614.0,502.0" fill="url(#tgL)" />
<line x1="614" y1="502" x2="943" y2="519" stroke="#2b2e33" stroke-width="1.2"/>
<line x1="613" y1="490" x2="942" y2="507.5" stroke="#2b2e33" stroke-width="0.9"/>
<path d="M940,507 l4,-1 l3,4 l-1,8 l-4,1 z" fill="#30363a" stroke="#2b2e33" stroke-width="0.8"/>
<polygon points="906.0,407.0 909.0,407.5 944.0,506.0 941.0,507.0" fill="#e8f0f2" />
<line x1="905.5" y1="407.3" x2="940.5" y2="507" stroke="#2b2e33" stroke-width="1"/>
<path d="M609,492 l6,-3 l4,3 l-1,9 l-5,2 z" fill="#c8d0d2" stroke="#2b2e33" stroke-width="1"/>
<line x1="581" y1="447.6" x2="932" y2="475.6" stroke="#ddd0ca" stroke-width="1.4"/>
<line x1="582" y1="449" x2="590" y2="470" stroke="#b85a2a" stroke-width="1.6" stroke-dasharray="2.2,2.8"/>
<line x1="592" y1="478" x2="608" y2="520" stroke="#b85a2a" stroke-width="1.4"/>
<circle cx="591.5" cy="474.5" r="4" fill="url(#ball)"/>
<defs><linearGradient id="tgL" gradientUnits="userSpaceOnUse" x1="0" y1="457.4" x2="0" y2="469.4" gradientTransform="skewY(3.045)"><stop offset="0" stop-color="#dfe7e9"/><stop offset="0.35" stop-color="#ffffff"/><stop offset="0.7" stop-color="#c4cdd0"/><stop offset="1" stop-color="#68727a"/></linearGradient><linearGradient id="tgR" gradientUnits="userSpaceOnUse" x1="0" y1="331.1" x2="0" y2="341" gradientTransform="skewY(9.26)"><stop offset="0" stop-color="#dfe7e9"/><stop offset="0.35" stop-color="#ffffff"/><stop offset="0.7" stop-color="#c4cdd0"/><stop offset="1" stop-color="#68727a"/></linearGradient></defs>
<path d="M1380.2,465 L1364,498 Q1355,518 1355.4,536 L1356.5,560 L1367.2,628.8 L1395.2,566.3 L1386,470 Z" fill="#578a48" stroke="#7cc064" stroke-width="1.3"/>
<path d="M1382.4,463.3 L1452,473.5 Q1468,478 1469,487 L1479.3,529.7 L1483.6,533.6 L1581,549.9 L1581,588.9 L1402.8,559.8 Z" fill="#c9dfe6" stroke="#2b2e33" stroke-width="1.2"/>
<polygon points="1380.2,465.0 1388.8,463.0 1402.8,559.8 1395.2,566.3" fill="url(#rg)" />
<line x1="1380.5" y1="465.5" x2="1395.2" y2="566.3" stroke="#7cc064" stroke-width="1.2"/>
<line x1="1388.8" y1="463" x2="1402.8" y2="559.8" stroke="#2b2e33" stroke-width="1"/>
<polygon points="1401.7,569.5 1581.0,598.9 1581.0,665.1 1368.8,630.0" fill="#4a5055" stroke="#2b2e33" stroke-width="1.2"/>
<polygon points="1395.2,566.3 1401.7,569.5 1368.8,630.0 1367.2,628.8" fill="#3a4044" />
<polygon points="1402.8,559.8 1581.0,588.9 1581.0,598.9 1401.7,569.5" fill="url(#tgR)" />
<line x1="1402.8" y1="559.8" x2="1581" y2="588.9" stroke="#2b2e33" stroke-width="1"/>
<line x1="1401.7" y1="569.5" x2="1581" y2="598.9" stroke="#2b2e33" stroke-width="1.2"/>
<line x1="1401.7" y1="569.5" x2="1368.8" y2="630" stroke="#2b2e33" stroke-width="1.4"/>
<line x1="1395.2" y1="566.3" x2="1367.2" y2="628.8" stroke="#7cc064" stroke-width="1.2"/>
<path d="M1396,560 l6,-2 l4,4 l-1,8 l-5,2 z" fill="#c8d0d2" stroke="#2b2e33" stroke-width="1"/>
<circle cx="1377" cy="549" r="4" fill="url(#ball)"/>
<polyline points="933,476 978.7,481.2 1100,495.5 1200,509.3 1300,523.5 1382.4,538 1387.5,580.7" fill="none" stroke="#b0602a" stroke-width="1.3"/>
<polyline points="978.7,480.8 1031.7,416.8 1043,416.8" fill="none" stroke="#8a5a2a" stroke-width="2"/>
<circle cx="978.7" cy="480.8" r="4" fill="#c8a84a" stroke="#8a7a30" stroke-width="0.8"/>

</svg>

<!-- DIALOG -->
<div class="a" style="left:20px;top:72px;width:328px;height:745px;background:#f0f0f0;border-left:1px solid #cfcfcf"></div>
<div class="a" style="left:20px;top:72px;width:328px;height:26px;background:#579fbb"></div>
<svg class="a" style="left:26px;top:78px" width="16" height="16" viewBox="0 0 16 16"><path d="M8,1.2 L9.3,1.2 L9.7,3.1 L11.2,3.8 L12.8,2.7 L13.8,3.6 L12.7,5.2 L13.3,6.7 L15.2,7.1 L15.2,8.9 L13.3,9.3 L12.7,10.8 L13.8,12.4 L12.8,13.4 L11.2,12.3 L9.7,12.9 L9.3,14.8 L6.7,14.8 L6.3,12.9 L4.8,12.3 L3.2,13.4 L2.2,12.4 L3.3,10.8 L2.7,9.3 L0.8,8.9 L0.8,7.1 L2.7,6.7 L3.3,5.2 L2.2,3.6 L3.2,2.7 L4.8,3.8 L6.3,3.1 L6.7,1.2 Z M8,5.2 A2.8,2.8 0 1 0 8,10.8 A2.8,2.8 0 1 0 8,5.2 Z" fill="#fff" fill-rule="evenodd"/></svg>
<div class="a" style="left:49px;top:77px;font-size:14px;color:#fff;line-height:18px">测量</div>
<svg class="a" style="left:304px;top:78px" width="16" height="16" viewBox="0 0 16 16"><path d="M12.5,5.5 A5.2,5.2 0 1 1 8,2.8" fill="none" stroke="#fff" stroke-width="2"/><path d="M7,0.2 L11,2.8 L7,5.4 Z" fill="#fff"/></svg>
<svg class="a" style="left:325px;top:79px" width="14" height="14" viewBox="0 0 14 14"><path d="M1.5,1.5 L12.5,12.5 M12.5,1.5 L1.5,12.5" stroke="#fff" stroke-width="2"/></svg>

<!-- section 1 -->
<div class="sec" style="top:102px;height:359px;border-bottom:2px solid #d9d9d9"></div>
<div class="a" style="left:33px;top:106px;font-size:13.5px;color:#19698a;line-height:18px">要测量的对象</div>
<i class="chev" style="left:326px;top:113px"></i>
<div class="grp" style="left:35px;top:132px;width:298px;height:55px"></div>
<div class="radio" style="left:40px;top:142px"><i class="a" style="left:2px;top:2px;width:7px;height:7px;border-radius:50%;background:#222"></i></div>
<div class="a" style="left:56px;top:140px;width:29px;height:19px;border:1px dotted #333"></div>
<div class="a" style="left:58px;top:140px;line-height:17px">对象</div>
<div class="radio" style="left:108px;top:142px"></div><div class="a" style="left:125px;top:140px;line-height:17px">点</div>
<div class="radio" style="left:176px;top:142px"></div><div class="a" style="left:193px;top:140px;line-height:17px">矢量</div>
<div class="radio" style="left:40px;top:165px"></div><div class="a" style="left:57px;top:163px;line-height:17px">对象集</div>
<div class="radio" style="left:108px;top:165px"></div><div class="a" style="left:125px;top:163px;line-height:17px">点集</div>
<div class="radio" style="left:176px;top:165px"></div><div class="a" style="left:193px;top:163px;line-height:17px">坐标系</div>
<div class="a" style="left:35px;top:189px;width:264px;height:32px;background:#fedc78"></div>
<div class="a" style="left:35px;top:196px;line-height:17px">选择对象 (0)</div>
<div class="a" style="left:301px;top:189px;width:32px;height:32px;background:#fedc78"></div>
<svg class="a" style="left:307px;top:195px" width="20" height="20" viewBox="0 0 20 20"><circle cx="10" cy="10" r="5.5" fill="none" stroke="#d00" stroke-width="1.6"/><path d="M10,1 V19 M1,10 H19" stroke="#111" stroke-width="1.5"/></svg>
<div class="grp" style="left:35px;top:223px;width:298px;height:167px"></div>
<div class="a" style="left:44px;top:226px;font-size:12.5px;color:#19698a;line-height:17px">列表</div>
<i class="chev" style="left:318px;top:233px;width:7px;height:7px"></i>
<div class="a" style="left:44px;top:253px;width:254px;height:128px;background:#fff;border:1px solid #cfcfcf"></div>
<div class="a" style="left:45px;top:274px;width:252px;height:1px;background:#e3e3e3"></div>
<div class="a" style="left:45px;top:294px;width:252px;height:1px;background:#e3e3e3"></div>
<div class="a" style="left:45px;top:314px;width:252px;height:1px;background:#e3e3e3"></div>
<div class="a" style="left:45px;top:334px;width:252px;height:1px;background:#e3e3e3"></div>
<div class="a" style="left:45px;top:354px;width:252px;height:1px;background:#e3e3e3"></div>
<div class="a" style="left:45px;top:374px;width:252px;height:1px;background:#e3e3e3"></div>
<div class="a" style="left:65px;top:295px;width:229px;height:19px;background:#8bbfd0"></div>
<div class="a" style="left:195px;top:254px;width:1px;height:125px;background:#e3e3e3"></div>
<div class="a" style="left:55px;top:264px;width:1px;height:44px;border-left:1px dotted #888"></div>
<div class="a" style="left:56px;top:265px;width:8px;border-top:1px dotted #888"></div>
<div class="a" style="left:56px;top:285px;width:8px;border-top:1px dotted #888"></div>
<div class="a" style="left:56px;top:305px;width:8px;border-top:1px dotted #888"></div>
<div class="a" style="left:67px;top:256px;line-height:17px">对象 1</div>
<div class="a" style="left:200px;top:256px;line-height:17px;word-spacing:1.5px">面 / 体(516)</div>
<div class="a" style="left:67px;top:276px;line-height:17px">对象 2</div>
<div class="a" style="left:200px;top:276px;line-height:17px;word-spacing:1.5px">面 / 体(513)</div>
<div class="a" style="left:68px;top:296px;line-height:17px;color:#333">选择对象</div>
<div class="a" style="left:49px;top:248px;width:250px;height:54px;border:4px solid #e8141a;box-shadow:2px 3px 5px rgba(0,0,0,0.45)"></div>
<div class="btn" style="left:300px;top:253px;width:24px;height:23px"></div>
<svg class="a" style="left:304px;top:256px" width="16" height="16"><path d="M2,2 L14,14 M14,2 L2,14" stroke="#9a9a9a" stroke-width="2.2"/></svg>
<div class="btn" style="left:300px;top:279px;width:24px;height:24px"></div>
<svg class="a" style="left:304px;top:283px" width="16" height="16"><path d="M3,2 H13" stroke="#aaa" stroke-width="1.6"/><path d="M8,4 L13,9 H10 V14 H6 V9 H3 Z" fill="#b0b0b0"/></svg>
<div class="btn" style="left:300px;top:305px;width:24px;height:24px"></div>
<svg class="a" style="left:304px;top:309px" width="16" height="16"><path d="M8,3 L13,8 H10 V13 H6 V8 H3 Z" fill="#b0b0b0"/></svg>
<div class="btn" style="left:300px;top:331px;width:24px;height:24px"></div>
<svg class="a" style="left:304px;top:335px" width="16" height="16"><path d="M8,13 L13,8 H10 V3 H6 V8 H3 Z" fill="#b0b0b0"/></svg>
<div class="btn" style="left:300px;top:357px;width:24px;height:23px"></div>
<svg class="a" style="left:304px;top:360px" width="16" height="16"><path d="M3,14 H13" stroke="#aaa" stroke-width="1.6"/><path d="M8,12 L13,7 H10 V2 H6 V7 H3 Z" fill="#b0b0b0"/></svg>

<div class="grp" style="left:35px;top:392px;width:298px;height:61px"></div>
<div class="a" style="left:44px;top:395px;font-size:12.5px;color:#19698a;line-height:17px">测量方法</div>
<div class="a" style="left:40px;top:416px;width:32px;height:32px;background:#8bc0d0"></div>
<svg class="a" style="left:38px;top:412px" width="140" height="40" viewBox="38 412 140 40">
<g fill="none" stroke-width="1.4" stroke-linecap="square">
<path d="M45.5,423.3 H66.5 M45.5,420.9 V430.8 M66.5,420.9 V430.8" stroke="#d0141a"/>
<path d="M45.5,443 V432.5 H66.5 V443" stroke="#111"/>
<path d="M79.2,423.3 H87.6 M79.2,420.9 V430.8 M87.6,420.9 V430.8 M94.2,426 H100.7 M94.2,424 V433.7 M100.7,424 V433.7" stroke="#d0141a"/>
<path d="M79.2,443 V432.5 H87.6 V443 M94.2,443 V435.5 H100.7 V443" stroke="#111"/>
<path d="M113.5,443 V432.5 H121.3 V438.4 H128.3 V435.5 H134.5 V443 Z" fill="#fff" stroke="none"/>
<path d="M113.5,423.3 H134.5 M113.5,420.9 V430.8 M121.3,420.9 V430.8 M128.3,420.9 V433.5 M134.5,420.9 V433.5" stroke="#d0141a"/>
<path d="M113.5,443 V432.5 H121.3 V438.4 H128.3 V435.5 H134.5 V443" stroke="#111"/>
<path d="M147.4,443.6 V439.3 H157.6 V436.7 H163.3 V433.3 H169.5 V443.6 Z" fill="#fff" stroke="none"/>
<path d="M147.4,422.5 H169.5 M147.4,426.2 H163.3 M147.4,432.8 H157.6 M147.4,420.5 V437.8 M169.5,420.5 V431.5 M163.3,424.5 V431.5 M157.6,430 V434.7" stroke="#d0141a"/>
<path d="M147.4,443.6 V439.3 H157.6 V436.7 H163.3 V433.3 H169.5 V443.6" stroke="#111"/>
</g></svg>

<!-- section 2 -->
<div class="sec" style="top:465px;height:94px;border-bottom:2px solid #d9d9d9"></div>
<div class="a" style="left:33px;top:469px;font-size:13.5px;color:#19698a;line-height:18px">结果过滤器</div>
<i class="chev" style="left:326px;top:476px"></i>
<div class="a" style="left:35px;top:497px;line-height:17px">显示 1 个测量，共 2 个</div>
<div class="btn" style="left:35px;top:518px;width:32px;height:32px;background:#fff;border-color:#d5d5d5"></div>
<div class="btn" style="left:69px;top:518px;width:32px;height:32px;background:#fff;border-color:#d5d5d5"></div>
<div class="a" style="left:103px;top:518px;width:32px;height:32px;background:#fedc78"></div>
<div class="btn" style="left:137px;top:518px;width:32px;height:32px;background:#fff;border-color:#d5d5d5"></div>
<div class="btn" style="left:171px;top:518px;width:32px;height:32px;background:#fff;border-color:#d5d5d5"></div>
<div class="btn" style="left:205px;top:518px;width:32px;height:32px;background:#fff;border-color:#d5d5d5"></div>
<svg class="a" style="left:33px;top:515px" width="210" height="38" viewBox="33 515 210 38">
<path d="M39,536 L49,545.5 M52.3,523.6 L61.6,533" stroke="#808080" stroke-width="1"/>
<path d="M43.9,540.6 L56.9,527.9" stroke="#b8a8c8" stroke-width="1"/>
<path d="M43.3,534.3 L50.3,541.3 M45.9,531.8 L52.9,538.8 M48.5,529.2 L55.5,536.2 M51.1,526.7 L58.1,533.7 " stroke="#c49090" stroke-width="1"/>
<circle cx="43.9" cy="540.6" r="2" fill="#9090c8"/><circle cx="56.9" cy="527.9" r="2" fill="#9090c8"/>
<path d="M74.2,545 Q85,528 96.1,545" stroke="#808080" stroke-width="1.4" fill="none"/>
<path d="M74.6,529 V539.6 M95.5,529 V539.6" stroke="#b89090" stroke-width="1"/>
<path d="M75,531.5 Q85,526.5 95,531.5" stroke="#b89090" stroke-width="1" fill="none"/>
<path d="M83,523.5 l4,4 M87,523.5 l-4,4" stroke="#b08080" stroke-width="1"/>
<path d="M112,523 V544.9 L128,527.6" stroke="#0a0a90" stroke-width="2.6" fill="none"/>
<path d="M112.7,525 Q119,522 122,528" stroke="#d01010" stroke-width="1.5" fill="none"/><path d="M119.5,527.5 L124.5,531 L124,525 Z" fill="#d01010"/>
<g stroke="#a8a8d8" stroke-width="0.8">
<path d="M153.2,523 L163.5,528.5 L153.2,534 L143,528.5 Z" fill="#d4d4d6"/><path d="M143,528.5 L153.2,534 V545 L143,539.5 Z" fill="#c6c7cf"/><path d="M153.2,534 L163.5,528.5 V539.5 L153.2,545 Z" fill="#bcbdc6"/>
<path d="M187,523 L197.3,528.5 L187,534 L176.8,528.5 Z" fill="#d2d3d8"/><path d="M176.8,528.5 L187,534 V545 L176.8,539.5 Z" fill="#c4c6d2"/><path d="M187,534 L197.3,528.5 V539.5 L187,545 Z" fill="#babdcc"/>
</g>
<g fill="#c8c8c8" stroke="#8a8a8a" stroke-width="0.8"><rect x="209" y="522.3" width="16" height="4.4"/><rect x="209" y="528.3" width="16" height="4.4"/><rect x="209" y="534.3" width="16" height="4.4"/></g>
<path d="M211,524.5 h3 M215.5,524.5 h2 M219,524.5 h3 M211,530.5 h3 M215.5,530.5 h2 M219,530.5 h3 M211,536.5 h3 M215.5,536.5 h2 M219,536.5 h3" stroke="#8a9ac0" stroke-width="0.8"/>
<path d="M228,536.5 V545 M223.8,540.8 H232.2" stroke="#8aa0c8" stroke-width="2"/>
</svg>

<!-- section 3 -->
<div class="sec" style="top:562px;height:24px;border-bottom:2px solid #d9d9d9"></div>
<div class="a" style="left:33px;top:566px;font-size:13.5px;color:#19698a;line-height:18px">提示</div>
<i class="chevd" style="left:326px;top:568px"></i>

<!-- section 4 -->
<div class="sec" style="top:589px;height:167px;border-bottom:2px solid #d9d9d9"></div>
<div class="a" style="left:33px;top:593px;font-size:13.5px;color:#19698a;line-height:18px">设置</div>
<i class="chev" style="left:326px;top:600px"></i>
<div class="a" style="left:35px;top:623px;line-height:17px">参考坐标系</div>
<div class="a" style="left:192px;top:620px;width:141px;height:24px;border:1px solid #adadad;background:#fff"></div>
<div class="a" style="left:196px;top:623px;width:117px;overflow:hidden;white-space:nowrap;line-height:17px">绝对坐标系 - 工作部件</div>
<i class="a" style="left:319px;top:630px;border-left:4px solid transparent;border-right:4px solid transparent;border-top:5px solid #111"></i>
<div class="cb" style="left:35px;top:650px"></div><div class="a" style="left:53px;top:648px;line-height:17px">将结果发送至 NX 控制台</div>
<div class="cb" style="left:35px;top:673px"></div><div class="a" style="left:53px;top:671px;line-height:17px">在信息窗口中显示结果</div>
<div class="cb" style="left:35px;top:696px"><svg class="a" style="left:1px;top:1px" width="10" height="10"><path d="M1,5 L4,8.5 L9.5,1" stroke="#222" stroke-width="1.4" fill="none"/></svg></div><div class="a" style="left:53px;top:694px;line-height:17px">启用提示</div>
<div class="a" style="left:35px;top:722px;line-height:17px">首选项</div>
<div class="a" style="left:301px;top:715px;width:32px;height:32px;border:1px solid #adadad;background:#fff"></div>
<svg class="a" style="left:304px;top:718px" width="26" height="26" viewBox="0 0 26 26"><path d="M3,9 L7,5 L23,20 L19,24 Z" fill="#f0d040" stroke="#b09020" stroke-width="0.8"/><path d="M8,10 l1,-1 M12,14 l1,-1 M16,18 l1,-1" stroke="#3050c0" stroke-width="1.2"/><path d="M10,12 Q14,7 17,10 L20,14 Q17,17 13,15 Z" fill="#f4c79a"/><ellipse cx="20" cy="9" rx="3" ry="3.6" fill="#2040b0"/></svg>

<i class="a" style="left:178px;top:761px;border-left:5px solid transparent;border-right:5px solid transparent;border-bottom:6px solid #111"></i>
<div class="a" style="left:26px;top:772px;width:316px;height:1px;background:#d0d0d0"></div>
<div class="a" style="left:219px;top:781px;width:54px;height:25px;background:#77b4ca"></div>
<div class="a" style="left:219px;top:785px;width:54px;text-align:center;color:#fff;line-height:17px">确定</div>
<div class="a" style="left:278px;top:781px;width:54px;height:25px;background:#e1e1e1;border:1px solid #adadad"></div>
<div class="a" style="left:278px;top:785px;width:54px;text-align:center;line-height:17px">取消</div>

<!-- OVERLAY -->
<!-- arrows -->
<svg class="a" style="left:1100px;top:310px" width="200" height="110" viewBox="1100 310 200 110">
<defs><filter id="sh" x="-20%" y="-20%" width="140%" height="140%"><feDropShadow dx="2" dy="3" stdDeviation="2" flood-color="#000" flood-opacity="0.45"/></filter></defs>
<g filter="url(#sh)">
<path d="M1187.7,332.1 L1134,394" stroke="#f00" stroke-width="3.2" stroke-linecap="round"/>
<path d="M1122.1,407.5 L1130,386 L1134,394.5 L1142.5,397 Z" fill="#f00"/>
<path d="M1281.5,375.2 L1223,401.5" stroke="#f00" stroke-width="3.2" stroke-linecap="round"/>
<path d="M1207.2,409 L1223.5,392.7 L1222,401.5 L1230.8,407.7 Z" fill="#f00"/>
</g>
</svg>
<!-- callout 1 -->
<div class="a" style="left:1192px;top:320px;width:179px;height:42px;background:#d0ecc8;border-radius:9px;box-shadow:2px 3px 4px rgba(0,0,0,0.45)"></div>
<div class="a" style="left:1192px;top:330px;width:179px;text-align:center;font-size:16.5px;font-weight:bold;color:#222;line-height:20px">测量角度9°</div>
<!-- callout 2 -->
<div class="a" style="left:1293px;top:376px;width:179px;height:79px;background:#d0ecc8;border-radius:9px;box-shadow:2px 3px 4px rgba(0,0,0,0.45)"></div>
<div class="a" style="left:1293px;top:385px;width:179px;text-align:center;font-size:17px;font-weight:bold;color:#222;line-height:19px">表达式点选上最后数<br>值不对不点选上就没<br>有数值</div>
<!-- popup -->
<div class="a" style="left:1042px;top:407px;width:169px;height:31px;background:#f0f0f0;border:1px solid #d5d5d5;box-shadow:1px 1px 2px rgba(0,0,0,0.3)"></div>
<div class="a" style="left:1045px;top:409px;width:6px;height:26px;background-image:radial-gradient(circle,#999 0.9px,transparent 1.1px);background-size:4px 3.2px"></div>
<div class="a" style="left:1060px;top:411px;width:146px;height:23px;background:#fff;border:1px solid #e0e0e0"></div>
<div class="a" style="left:1112px;top:412px;width:1px;height:21px;background:#e6e6e6"></div>
<div class="a" style="left:1165px;top:412px;width:1px;height:21px;background:#e6e6e6"></div>
<div class="a" style="left:1178px;top:412px;width:1px;height:21px;background:#e6e6e6"></div>
<div class="a" style="left:1202px;top:412px;width:1px;height:21px;background:#e6e6e6"></div>
<div class="a" style="left:1065px;top:413px;line-height:17px;font-size:12px">内角</div>
<div class="a" style="left:1098px;top:413px;line-height:17px;font-size:11px">▼</div>
<div class="a" style="left:1117px;top:413px;line-height:17px;font-size:12px">9.00000</div>
<div class="a" style="left:1170px;top:411px;line-height:17px;font-size:11px">°</div>
<svg class="a" style="left:1183px;top:414px" width="16" height="16" viewBox="0 0 16 16"><rect x="0.5" y="2.5" width="15" height="13" fill="#f8c820" stroke="#10108a"/><rect x="1" y="0.5" width="6" height="6" fill="#20206a"/><rect x="2.5" y="1" width="3" height="2" fill="#e0e0f0"/><text x="8" y="7.5" font-size="6" font-weight="bold" fill="#10108a" font-family="Liberation Sans">1=</text><text x="1.5" y="14" font-size="6.5" font-weight="bold" fill="#10108a" font-family="Liberation Sans">P2=</text></svg>
<!-- tooltip -->
<div class="a" style="left:691px;top:767px;width:170px;height:55px;background:rgba(255,255,255,0.65);border:1px solid rgba(200,200,200,0.9);box-shadow:1px 2px 3px rgba(0,0,0,0.3)"></div>
<div class="a" style="left:713px;top:770px;line-height:17px;color:#3a3f4a;font-size:12.7px">单个面 : 面 / 体(463)</div>
<div class="a" style="left:713px;top:787px;line-height:17px;color:#3a3f4a;font-size:12.7px">面积 &nbsp;= 15054.40223 mm²</div>
<div class="a" style="left:713px;top:804px;line-height:17px;color:#3a3f4a;font-size:12.7px">周长 &nbsp;= 1578.37868 mm</div>
<svg class="a" style="left:693px;top:787px" width="16" height="16" viewBox="0 0 16 16"><path d="M2,5 L8,2 L14,5 V11 L8,14 L2,11 Z" fill="#f8b020" stroke="#a0a0a0" stroke-width="0.8"/><path d="M2,5 L8,8 L14,5 M8,8 V14" stroke="#c08020" stroke-width="0.8" fill="none"/><path d="M8,8 L14,5 V11 L8,14 Z" fill="#ffe070"/></svg>

<!-- STATUS -->
<div class="a" style="left:20px;top:862px;width:1561px;height:1px;background:#d4d4d4"></div>
<svg class="a" style="left:0;top:864px" width="190" height="18" viewBox="0 0 190 18">
<path d="M1,6 q3,-5 6,0 q3,5 0,10 q-3,3 -6,-2 z M4,9 q4,-3 5,3" stroke="#c8a030" stroke-width="1.6" fill="none"/>
<defs><linearGradient id="cg" x1="0" y1="0" x2="0" y2="1"><stop offset="0" stop-color="#ffd860"/><stop offset="1" stop-color="#f08820"/></linearGradient></defs><g id="cube"><path d="M21,8 L27,11 V19 L21,16 Z" fill="url(#cg)"/><path d="M27,11 L33,8 V16 L27,19 Z" fill="#f6dcef"/><path d="M21,8 L27,5 L33,8 L27,11 Z" fill="#c890e0"/><path d="M21,8 L27,11 L33,8 M27,11 V19" stroke="#a070b0" stroke-width="0.6" fill="none"/></g>
<path d="M46,8 q7,-3 14,0 v11 h-14 z" fill="url(#cg)"/><ellipse cx="53" cy="8" rx="7" ry="2.2" fill="#c890e0"/><use href="#cube" x="50"/><use href="#cube" x="74"/><use href="#cube" x="100"/><use href="#cube" x="124"/><use href="#cube" x="150"/>
<path d="M32,9 h4 v4 h-4 z M32,15 h4 v4 h-4 z" stroke="#333" stroke-width="1.1" fill="none"/>
<circle cx="57" cy="16" r="3.2" stroke="#333" stroke-width="1.2" fill="none"/><circle cx="57" cy="16" r="1.2" fill="#333"/>
<path d="M80,19 l3,-8 M86,19 l-2,-8 M83,13 v3" stroke="#333" stroke-width="1.1" fill="none"/>
<path d="M105,11 v8 h3" stroke="#333" stroke-width="1.2" fill="none"/>
<path d="M129,19 l6,-6 M132,19 l5,-5" stroke="#333" stroke-width="1.3"/>
<circle cx="157" cy="17" r="2.6" stroke="#333" stroke-width="1.1" fill="none"/><path d="M153,20 l7,-7" stroke="#333" stroke-width="1"/>
<path d="M181,19 v-5 h3 v-3 h4 v8" stroke="#333" stroke-width="1.1" fill="none"/>
</svg>
<div class="a" style="left:195px;top:866px;font-size:11px;line-height:16px;white-space:nowrap">导出 STEP 文件</div>
<div class="a" style="left:280px;top:866px;font-size:11px;line-height:16px;white-space:nowrap">导出 PDF 文件</div>
<div class="a" style="left:359px;top:866px;font-size:11px;line-height:16px;white-space:nowrap">导出部件</div>
<div class="a" style="left:413px;top:866px;font-size:11px;line-height:16px;white-space:nowrap">导出 Parasolid 文件</div>
<div class="a" style="left:519px;top:866px;font-size:11px;line-height:16px;white-space:nowrap">导出 CATIA V5</div>
<div class="a" style="left:599px;top:866px;width:1px;height:16px;background:#d0d0d0"></div>
<div class="a" style="left:1368px;top:862px;font-family:'Liberation Mono',monospace;font-size:14px;line-height:16px;color:#5a5a5a;white-space:nowrap;transform-origin:0 0;transform:scaleX(1.015)">UG爱好者论坛 WWW.UGSNX.COM</div>
</body></html>
